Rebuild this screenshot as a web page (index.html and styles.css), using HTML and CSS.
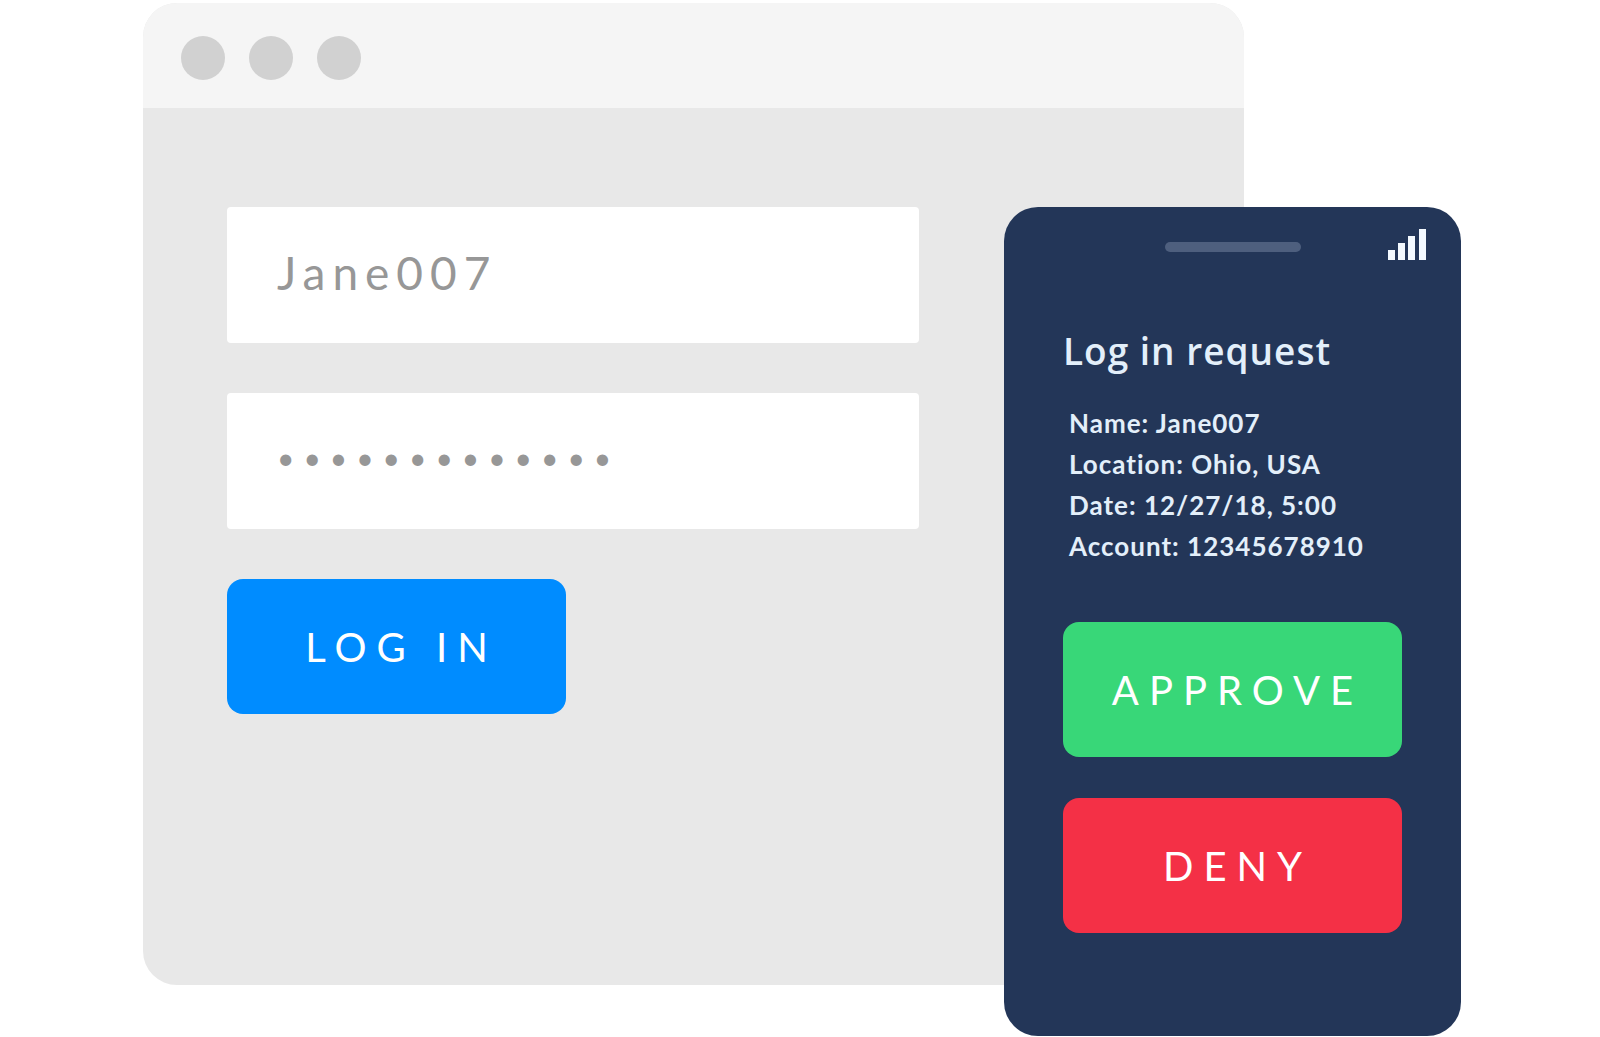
FILE: index.html
```html
<!DOCTYPE html>
<html lang="en">
<head>
  <meta charset="UTF-8" />
  <meta name="viewport" content="width=device-width, initial-scale=1.0" />
  <title>Log in request</title>
  <link rel="stylesheet" href="styles.css">
</head>
<body>
  <main class="stage">

    <section class="browser">
      <div class="titlebar">
        <span class="dot"></span>
        <span class="dot"></span>
        <span class="dot"></span>
      </div>
      <form class="login">
        <input type="text" id="username" aria-label="Username" value="Jane007" />
        <input type="password" id="password" aria-label="Password" value="jamesbond0007" />
        <button type="button" class="btn btn-login">LOG IN</button>
      </form>
    </section>

    <section class="phone">
      <div class="statusbar">
        <span class="speaker"></span>
        <svg class="signal" width="38" height="31" viewBox="0 0 38 31" aria-hidden="true">
          <rect x="0" y="21" width="7" height="10" />
          <rect x="10" y="14" width="7" height="17" />
          <rect x="20" y="7" width="7" height="24" />
          <rect x="31" y="0" width="7" height="31" />
        </svg>
      </div>
      <h1>Log in request</h1>
      <ul class="details">
        <li>Name: Jane007</li>
        <li>Location: Ohio, USA</li>
        <li>Date: 12/27/18, 5:00</li>
        <li>Account: 12345678910</li>
      </ul>
      <div class="actions">
        <button type="button" class="btn btn-approve">APPROVE</button>
        <button type="button" class="btn btn-deny">DENY</button>
      </div>
    </section>

  </main>
</body>
</html>
```

FILE: styles.css
```css
* {
  box-sizing: border-box;
}

body {
  margin: 0;
  font-family: Lato, sans-serif;
  background: #fff;
}

/* the phone shares the middle column with the browser window */
.stage {
  display: grid;
  grid-template-columns: 1fr 240px 217px;
  padding: 3px 139px 0 143px;
}

.browser {
  grid-column: 1 / 3;
  grid-row: 1;
  margin-bottom: 51px;
  background: #e8e8e8;
  border-radius: 34px;
  overflow: hidden;
}

.titlebar {
  display: flex;
  align-items: center;
  gap: 24px;
  height: 105px;
  padding: 4px 38px 0;
  background: #f5f5f5;
}

.dot {
  width: 44px;
  height: 44px;
  border-radius: 50%;
  background: #d1d1d1;
}

.login {
  display: flex;
  flex-direction: column;
  align-items: flex-start;
  gap: 50px;
  padding: 99px 325px 0 84px;
}

.login input {
  width: 100%;
  height: 136px;
  padding: 0 50px 6px;
  border: none;
  border-radius: 4px;
  background: #fff;
  color: #979797;
  font-family: Lato, sans-serif;
  font-size: 46px;
  letter-spacing: 7px;
}

.login input[type="password"] {
  padding-bottom: 8px;
  font-size: 30px;
  letter-spacing: 9px;
}

.btn {
  width: 339px;
  height: 135px;
  padding: 0 0 0 10px;
  border: none;
  border-radius: 16px;
  color: #fff;
  font-family: Lato, sans-serif;
  font-size: 40px;
  letter-spacing: 10px;
  cursor: pointer;
}

.btn-login {
  background: #008cff;
}

.btn-approve {
  background: #38d778;
}

.btn-deny {
  background: #f43046;
}

.phone {
  grid-column: 2 / 4;
  grid-row: 1;
  z-index: 1;
  margin-top: 204px;
  padding: 22px 59px 103px;
  background: #233658;
  border-radius: 34px;
  color: #e3effa;
}

.statusbar {
  display: grid;
  grid-template-columns: 1fr 136px 1fr;
  align-items: center;
  margin: 0 -24px;
}

.speaker {
  grid-column: 2;
  height: 10px;
  margin-top: 4px;
  border-radius: 5px;
  background: #4e5f7e;
}

.signal {
  justify-self: end;
  fill: #f3f9ff;
}

h1 {
  margin: 64px 0 0;
  font-family: "Open Sans", sans-serif;
  font-size: 37px;
  font-weight: 600;
  line-height: 54px;
  letter-spacing: 1px;
  white-space: nowrap;
}

.details {
  margin: 25px 0 0;
  padding: 0 0 0 6px;
  list-style: none;
  font-size: 26px;
  font-weight: 700;
  line-height: 41px;
  letter-spacing: 1px;
  white-space: nowrap;
}

.actions {
  display: flex;
  flex-direction: column;
  gap: 41px;
  margin-top: 55px;
}
```
